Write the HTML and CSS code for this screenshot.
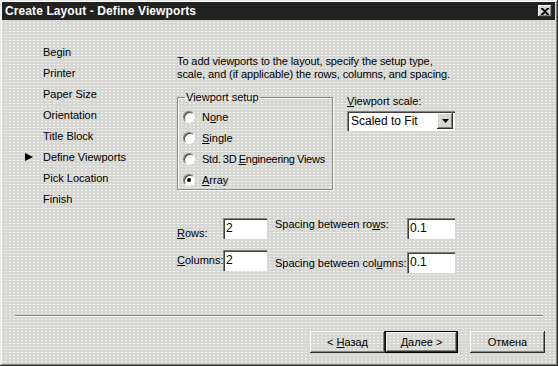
FILE: index.html
```html
<!DOCTYPE html>
<html lang="en">
  <head>
    <meta charset="UTF-8" />
    <title>Create Layout - Define Viewports</title>
    <link rel="stylesheet" href="styles.css">
  </head>
  <body>
    <div class="window">
      <!-- title bar -->
      <div class="title-bar">
        <span class="title-text">Create Layout - Define Viewports</span>
        <span class="close-btn">
          <svg width="8" height="7" viewBox="0 0 8 7"><path d="M0 0h2l2 2 2-2h2v1L5 3.5 8 6v1H6L4 5 2 7H0V6l3-2.5L0 1z" fill="#000"/></svg>
        </span>
      </div>

      <div class="main">
        <!-- wizard steps -->
        <ul class="steps">
          <li class="step">Begin</li>
          <li class="step">Printer</li>
          <li class="step">Paper Size</li>
          <li class="step">Orientation</li>
          <li class="step">Title Block</li>
          <li class="step current">Define Viewports</li>
          <li class="step">Pick Location</li>
          <li class="step">Finish</li>
        </ul>

        <!-- page content -->
        <div class="content">
          <p class="intro">To add viewports to the layout, specify the setup type,<br>scale, and (if applicable) the rows, columns, and spacing.</p>

          <div class="setup-row">
            <fieldset class="group">
              <legend>Viewport setup</legend>
              <label class="radio"><span class="radio-dot"></span><span>N<u>o</u>ne</span></label>
              <label class="radio"><span class="radio-dot"></span><span><u>S</u>ingle</span></label>
              <label class="radio"><span class="radio-dot"></span><span class="tight">Std. 3D <u>E</u>ngineering Views</span></label>
              <label class="radio"><span class="radio-dot checked"></span><span><u>A</u>rray</span></label>
            </fieldset>

            <div class="scale">
              <div class="scale-label"><u>V</u>iewport scale:</div>
              <div class="combo">
                <span class="combo-text">Scaled to Fit</span>
                <span class="combo-btn">
                  <svg width="7" height="4" viewBox="0 0 7 4"><path d="M0 0h7L3.5 4z" fill="#000"/></svg>
                </span>
              </div>
            </div>
          </div>

          <div class="grid">
            <span class="lbl lbl-rows"><u>R</u>ows:</span>
            <span class="field">2</span>
            <span class="lbl lbl-sp">Spacing between ro<u>w</u>s:</span>
            <span class="field field-wide">0.1</span>

            <span class="lbl"><u>C</u>olumns:</span>
            <span class="field">2</span>
            <span class="lbl lbl-sp2">Spacing between col<u>u</u>mns:</span>
            <span class="field field-wide field-low">0.1</span>
          </div>
        </div>
      </div>

      <!-- buttons -->
      <div class="footer">
        <div class="separator"></div>
        <div class="buttons">
          <span class="btn"><span>&lt; <u>Н</u>азад</span></span>
          <span class="btn default"><span><u>Д</u>алее &gt;</span></span>
          <span class="btn cancel"><span>Отмена</span></span>
        </div>
      </div>
    </div>
  </body>
</html>
```

FILE: styles.css
```css
body {
  margin: 0;
  padding: 0;
  background: #d6d6d2;
  font-family: "Liberation Sans", Arial, sans-serif;
  font-size: 11px;
  color: #000;
}

/* window frame */
.window {
  width: 558px;
  height: 366px;
  box-sizing: border-box;
  padding: 2px 3px 3px 2px;
  display: flex;
  flex-direction: column;
  background-color: #d6d6d2;
  background-image: radial-gradient(circle, rgba(255, 255, 255, 0.6) 0.6px, transparent 0.9px);
  background-size: 4px 3px;
  box-shadow: inset -1px -1px #303030, inset 1px 1px #e8e8e4, inset -2px -2px #808080, inset 2px 2px #ffffff;
}

.title-bar {
  height: 18px;
  background: #222222;
  color: #ffffff;
  display: flex;
  align-items: center;
  justify-content: space-between;
  padding: 0 3px 0 3px;
  flex-shrink: 0;
}

.title-text {
  font-weight: bold;
  font-size: 12px;
  letter-spacing: 0.1px;
}

.close-btn {
  width: 14px;
  height: 12px;
  box-sizing: border-box;
  background: #d6d6d2;
  display: flex;
  align-items: center;
  justify-content: center;
  box-shadow: inset -1px -1px #303030, inset 1px 1px #ffffff, inset -2px -2px #808080;
}

.main {
  display: flex;
  flex: 1;
}

/* wizard steps */
.steps {
  list-style: none;
  margin: 0;
  padding: 22px 0 0 0;
  width: 172px;
  flex-shrink: 0;
}

.step {
  height: 21px;
  line-height: 21px;
  padding-left: 41px;
  position: relative;
}

.step.current::before {
  content: "";
  position: absolute;
  left: 23px;
  top: 6px;
  border-left: 8px solid #000;
  border-top: 4.5px solid transparent;
  border-bottom: 4.5px solid transparent;
}

/* content */
.content {
  padding-top: 35px;
  padding-left: 3px;
}

.intro {
  margin: 0;
  line-height: 13px;
  letter-spacing: -0.1px;
}

.setup-row {
  display: flex;
  gap: 14px;
  margin-top: 11px;
}

.group {
  margin: 0;
  width: 156px;
  height: 98px;
  box-sizing: border-box;
  padding: 3px 0 0 5px;
  border: 1px solid #888884;
  box-shadow: 1px 1px #ffffff, inset 1px 1px #ffffff;
}

.group legend {
  padding: 0 1px;
  margin-left: 2px;
  line-height: 11px;
}

.radio {
  display: flex;
  align-items: center;
  height: 21px;
  gap: 7px;
  white-space: nowrap;
}

.tight {
  letter-spacing: -0.25px;
  word-spacing: -0.5px;
}

.radio-dot {
  width: 12px;
  height: 12px;
  flex-shrink: 0;
  box-sizing: border-box;
  border-radius: 50%;
  background: #ffffff;
  border: 1px solid;
  border-color: #808080 #ffffff #ffffff #808080;
  box-shadow: inset 1px 1px #404040;
  position: relative;
}

.radio-dot.checked::after {
  content: "";
  position: absolute;
  left: 3px;
  top: 3px;
  width: 4px;
  height: 4px;
  border-radius: 50%;
  background: #000;
}

.scale {
  padding-top: 3px;
}

.scale-label {
  line-height: 13px;
  margin-bottom: 3px;
}

.combo {
  width: 108px;
  height: 20px;
  box-sizing: border-box;
  background: #ffffff;
  display: flex;
  align-items: center;
  justify-content: space-between;
  padding: 2px;
  box-shadow: inset 1px 1px #808080, inset 2px 2px #404040, inset -1px -1px #ffffff;
}

.combo-text {
  padding-left: 2px;
  font-size: 12px;
}

.combo-btn {
  width: 16px;
  height: 16px;
  box-sizing: border-box;
  background: #d6d6d2;
  display: flex;
  align-items: center;
  justify-content: center;
  box-shadow: inset -1px -1px #303030, inset 1px 1px #ffffff, inset -2px -2px #808080;
}

/* rows / columns */
.grid {
  display: grid;
  grid-template-columns: 46px 52px 132px 48px;
  grid-template-rows: 21px 21px;
  row-gap: 11px;
  margin-top: 28px;
  align-items: center;
}

.lbl {
  line-height: 13px;
}

.lbl-rows {
  align-self: end;
  margin-bottom: -1px;
}

.lbl-sp {
  align-self: start;
}

.lbl-sp2 {
  margin-top: 5px;
}

.field {
  width: 44px;
  height: 21px;
  box-sizing: border-box;
  background: #ffffff;
  padding: 3px 0 0 3px;
  font-size: 12px;
  box-shadow: inset 1px 1px #808080, inset 2px 2px #404040, inset -1px -1px #ffffff;
}

.field-wide {
  width: 48px;
}

.field-low {
  margin-top: 4px;
}

/* footer */
.footer {
  flex-shrink: 0;
  padding: 0 10px 10px 13px;
}

.separator {
  height: 1px;
  background: #808080;
  border-bottom: 1px solid #ffffff;
  margin: 0 2px 14px 0;
}

.buttons {
  display: flex;
  justify-content: flex-end;
}

.btn {
  width: 75px;
  height: 22px;
  box-sizing: border-box;
  display: flex;
  align-items: center;
  justify-content: center;
  box-shadow: inset -1px -1px #303030, inset 1px 1px #ffffff, inset -2px -2px #808080;
}

.btn.default {
  border: 1px solid #000;
  width: 73px;
}

.btn.cancel {
  margin-left: 12px;
}
```
